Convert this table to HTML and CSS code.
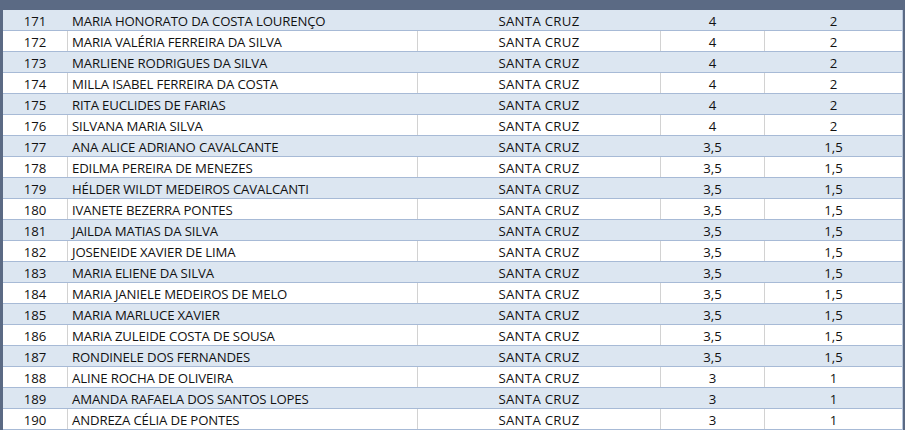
FILE: index.html
```html
<!DOCTYPE html>
<html lang="pt">
<head>
<meta charset="utf-8">
<title>Lista</title>
<link rel="stylesheet" href="styles.css">
</head>
<body>
<div class="frame">
  <div class="topbar"></div>
  <div class="sheet">
    <div class="row alt"><span class="c n">171</span><span class="c name">MARIA HONORATO DA COSTA LOURENÇO</span><span class="c city">SANTA CRUZ</span><span class="c v">4</span><span class="c w">2</span></div>
    <div class="row"><span class="c n">172</span><span class="c name">MARIA VALÉRIA FERREIRA DA SILVA</span><span class="c city">SANTA CRUZ</span><span class="c v">4</span><span class="c w">2</span></div>
    <div class="row alt"><span class="c n">173</span><span class="c name">MARLIENE RODRIGUES DA SILVA</span><span class="c city">SANTA CRUZ</span><span class="c v">4</span><span class="c w">2</span></div>
    <div class="row"><span class="c n">174</span><span class="c name">MILLA ISABEL FERREIRA DA COSTA</span><span class="c city">SANTA CRUZ</span><span class="c v">4</span><span class="c w">2</span></div>
    <div class="row alt"><span class="c n">175</span><span class="c name">RITA EUCLIDES DE FARIAS</span><span class="c city">SANTA CRUZ</span><span class="c v">4</span><span class="c w">2</span></div>
    <div class="row"><span class="c n">176</span><span class="c name">SILVANA MARIA SILVA</span><span class="c city">SANTA CRUZ</span><span class="c v">4</span><span class="c w">2</span></div>
    <div class="row alt"><span class="c n">177</span><span class="c name">ANA ALICE ADRIANO CAVALCANTE</span><span class="c city">SANTA CRUZ</span><span class="c v">3,5</span><span class="c w">1,5</span></div>
    <div class="row"><span class="c n">178</span><span class="c name">EDILMA PEREIRA DE MENEZES</span><span class="c city">SANTA CRUZ</span><span class="c v">3,5</span><span class="c w">1,5</span></div>
    <div class="row alt"><span class="c n">179</span><span class="c name">HÉLDER WILDT MEDEIROS CAVALCANTI</span><span class="c city">SANTA CRUZ</span><span class="c v">3,5</span><span class="c w">1,5</span></div>
    <div class="row"><span class="c n">180</span><span class="c name">IVANETE BEZERRA PONTES</span><span class="c city">SANTA CRUZ</span><span class="c v">3,5</span><span class="c w">1,5</span></div>
    <div class="row alt"><span class="c n">181</span><span class="c name">JAILDA MATIAS DA SILVA</span><span class="c city">SANTA CRUZ</span><span class="c v">3,5</span><span class="c w">1,5</span></div>
    <div class="row"><span class="c n">182</span><span class="c name">JOSENEIDE XAVIER DE LIMA</span><span class="c city">SANTA CRUZ</span><span class="c v">3,5</span><span class="c w">1,5</span></div>
    <div class="row alt"><span class="c n">183</span><span class="c name">MARIA ELIENE DA SILVA</span><span class="c city">SANTA CRUZ</span><span class="c v">3,5</span><span class="c w">1,5</span></div>
    <div class="row"><span class="c n">184</span><span class="c name">MARIA JANIELE MEDEIROS DE MELO</span><span class="c city">SANTA CRUZ</span><span class="c v">3,5</span><span class="c w">1,5</span></div>
    <div class="row alt"><span class="c n">185</span><span class="c name">MARIA MARLUCE XAVIER</span><span class="c city">SANTA CRUZ</span><span class="c v">3,5</span><span class="c w">1,5</span></div>
    <div class="row"><span class="c n">186</span><span class="c name">MARIA ZULEIDE COSTA DE SOUSA</span><span class="c city">SANTA CRUZ</span><span class="c v">3,5</span><span class="c w">1,5</span></div>
    <div class="row alt"><span class="c n">187</span><span class="c name">RONDINELE DOS FERNANDES</span><span class="c city">SANTA CRUZ</span><span class="c v">3,5</span><span class="c w">1,5</span></div>
    <div class="row"><span class="c n">188</span><span class="c name">ALINE ROCHA DE OLIVEIRA</span><span class="c city">SANTA CRUZ</span><span class="c v">3</span><span class="c w">1</span></div>
    <div class="row alt"><span class="c n">189</span><span class="c name">AMANDA RAFAELA DOS SANTOS LOPES</span><span class="c city">SANTA CRUZ</span><span class="c v">3</span><span class="c w">1</span></div>
    <div class="row"><span class="c n">190</span><span class="c name">ANDREZA CÉLIA DE PONTES</span><span class="c city">SANTA CRUZ</span><span class="c v">3</span><span class="c w">1</span></div>
  </div>
</div>
</body>
</html>
```
FILE: styles.css
```css
html, body {
  margin: 0;
  padding: 0;
  background: #5b6a84;
}
.frame {
  width: 905px;
  height: 430px;
  overflow: hidden;
  background: #5b6a84;
}
.topbar {
  height: 10px;
  background: #5b6a84;
}
.sheet {
  margin-left: 3px;
  margin-right: 2px;
  background: #ffffff;
  border-right: 1px solid #b7c6dc;
}
.row {
  display: grid;
  grid-template-columns: 65px 350px 243px 104px 137px;
  height: 20px;
  border-bottom: 1px solid #a7bad6;
  background: #ffffff;
  font-family: "Open Sans", "Noto Sans", sans-serif;
  font-size: 13.2px;
  color: #111111;
}
.row.alt {
  background: #dce6f1;
}
.c {
  display: flex;
  align-items: center;
  height: 20px;
  line-height: 20px;
  padding-top: 1px;
  white-space: nowrap;
  overflow: hidden;
  border-right: 1px solid #d2d2d2;
  box-sizing: border-box;
}
.row.alt .c {
  border-right-color: transparent;
}
.c.w {
  border-right: none;
}
.n, .city, .v, .w {
  justify-content: center;
}
.name {
  padding-left: 4px;
  letter-spacing: -0.15px;
}
.city {
  letter-spacing: 0.3px;
}
```
